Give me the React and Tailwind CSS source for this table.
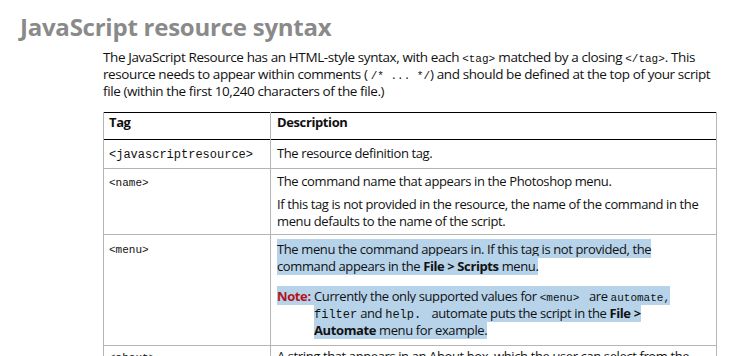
const sans = "font-['Open_Sans',sans-serif]";
const mono = "font-['Liberation_Mono','Courier_New',monospace]";

function Code({ children, className = "text-[11px]" }) {
    return <span className={`${mono} leading-none tracking-normal whitespace-pre ${className}`}>{children}</span>;
}

function Hl({ children }) {
    return <span className="bg-[#b7d3ea] py-[0.5px]">{children}</span>;
}

// one printed line of text, fixed height so code spans don't push it
function Line({ children, className = "" }) {
    return <div className={`h-[17px] leading-[17px] whitespace-nowrap ${className}`}>{children}</div>;
}

const cellL = "px-[5px] align-top border-l border-l-[#b5b5b5]";
const cellR = "px-[6px] align-top border-l border-l-[#b5b5b5] border-r border-r-[#b5b5b5]";

export default function App() {
    return (
        <div className={`w-[736px] h-[356px] overflow-hidden bg-white text-[#111] ${sans}`}>
            {/* Heading */}
            <h1 className="pl-[20px] pt-[12px] h-[49px] text-[24px] leading-[30px] font-bold text-[#8a8a8a] tracking-[-0.01em]">
                JavaScript resource syntax
            </h1>

            <div className="pl-[103px]">
                <div className="text-[13.5px] tracking-[-0.03em]">
                    <Line>
                        The JavaScript Resource has an HTML-style syntax, with each <Code>&lt;tag&gt;</Code> matched by a closing <Code>&lt;/tag&gt;</Code>. This
                    </Line>
                    <Line>
                        resource needs to appear within comments ( <Code>/* ... */</Code>) and should be defined at the top of your script
                    </Line>
                    <Line>file (within the first 10,240 characters of the file.)</Line>
                </div>

                <table className="mt-[12px] w-[614px] border-collapse text-[13px] tracking-[-0.03em]">
                    <colgroup>
                        <col className="w-[167px]" />
                        <col />
                    </colgroup>
                    <thead>
                        <tr className="border-t-[1.5px] border-t-black border-b border-b-black">
                            <th className={`${cellL} h-[27px] align-middle text-left font-bold`}>Tag</th>
                            <th className={`${cellR} h-[27px] align-middle text-left font-bold`}>Description</th>
                        </tr>
                    </thead>
                    <tbody>
                        <tr className="border-b border-b-[#b5b5b5]">
                            <td className={`${cellL} pt-[5px] pb-[6px]`}>
                                <Line>
                                    <Code className="text-[12px]">&lt;javascriptresource&gt;</Code>
                                </Line>
                            </td>
                            <td className={`${cellR} pt-[5px] pb-[6px]`}>
                                <Line>The resource definition tag.</Line>
                            </td>
                        </tr>
                        <tr className="border-b border-b-[#b5b5b5]">
                            <td className={`${cellL} pt-[4px] pb-[4px]`}>
                                <Line>
                                    <Code>&lt;name&gt;</Code>
                                </Line>
                            </td>
                            <td className={`${cellR} pt-[4px] pb-[4px]`}>
                                <Line>The command name that appears in the Photoshop menu.</Line>
                                <Line className="mt-[6px]">
                                    If this tag is not provided in the resource, the name of the command in the
                                </Line>
                                <Line>menu defaults to the name of the script.</Line>
                            </td>
                        </tr>
                        <tr className="border-b border-b-[#b5b5b5]">
                            <td className={`${cellL} pt-[5px] pb-[7px]`}>
                                <Line>
                                    <Code>&lt;menu&gt;</Code>
                                </Line>
                            </td>
                            <td className={`${cellR} pt-[5px] pb-[7px]`}>
                                <Line>
                                    <Hl>The menu the command appears in. If this tag is not provided, the</Hl>
                                </Line>
                                <Line>
                                    <Hl>
                                        command appears in the <b>File &gt; Scripts</b> menu.
                                    </Hl>
                                </Line>
                                <div className="mt-[13px] flex">
                                    <div className="w-[37px] shrink-0">
                                        <Line>
                                            <Hl>
                                                <span className="font-bold text-[#b3141c]">Note:</span>
                                                <span className="inline-block w-[5px]" />
                                            </Hl>
                                        </Line>
                                    </div>
                                    <div>
                                        <Line>
                                            <Hl>
                                                Currently the only supported values for <Code>&lt;menu&gt; </Code> are <Code>automate,</Code>
                                            </Hl>
                                        </Line>
                                        <Line>
                                            <Hl>
                                                <Code className="text-[12px]">filter</Code> and <Code className="text-[12px]">help. </Code> automate puts the script in the <b>File &gt;</b>
                                            </Hl>
                                        </Line>
                                        <Line>
                                            <Hl>
                                                <b>Automate</b> menu for example.
                                            </Hl>
                                        </Line>
                                    </div>
                                </div>
                            </td>
                        </tr>
                        <tr>
                            <td className={`${cellL} pt-[2px]`}>
                                <Line>
                                    <Code>&lt;about&gt;</Code>
                                </Line>
                            </td>
                            <td className={`${cellR} pt-[2px]`}>
                                <Line>A string that appears in an About box, which the user can select from the</Line>
                            </td>
                        </tr>
                    </tbody>
                </table>
            </div>
        </div>
    );
}
